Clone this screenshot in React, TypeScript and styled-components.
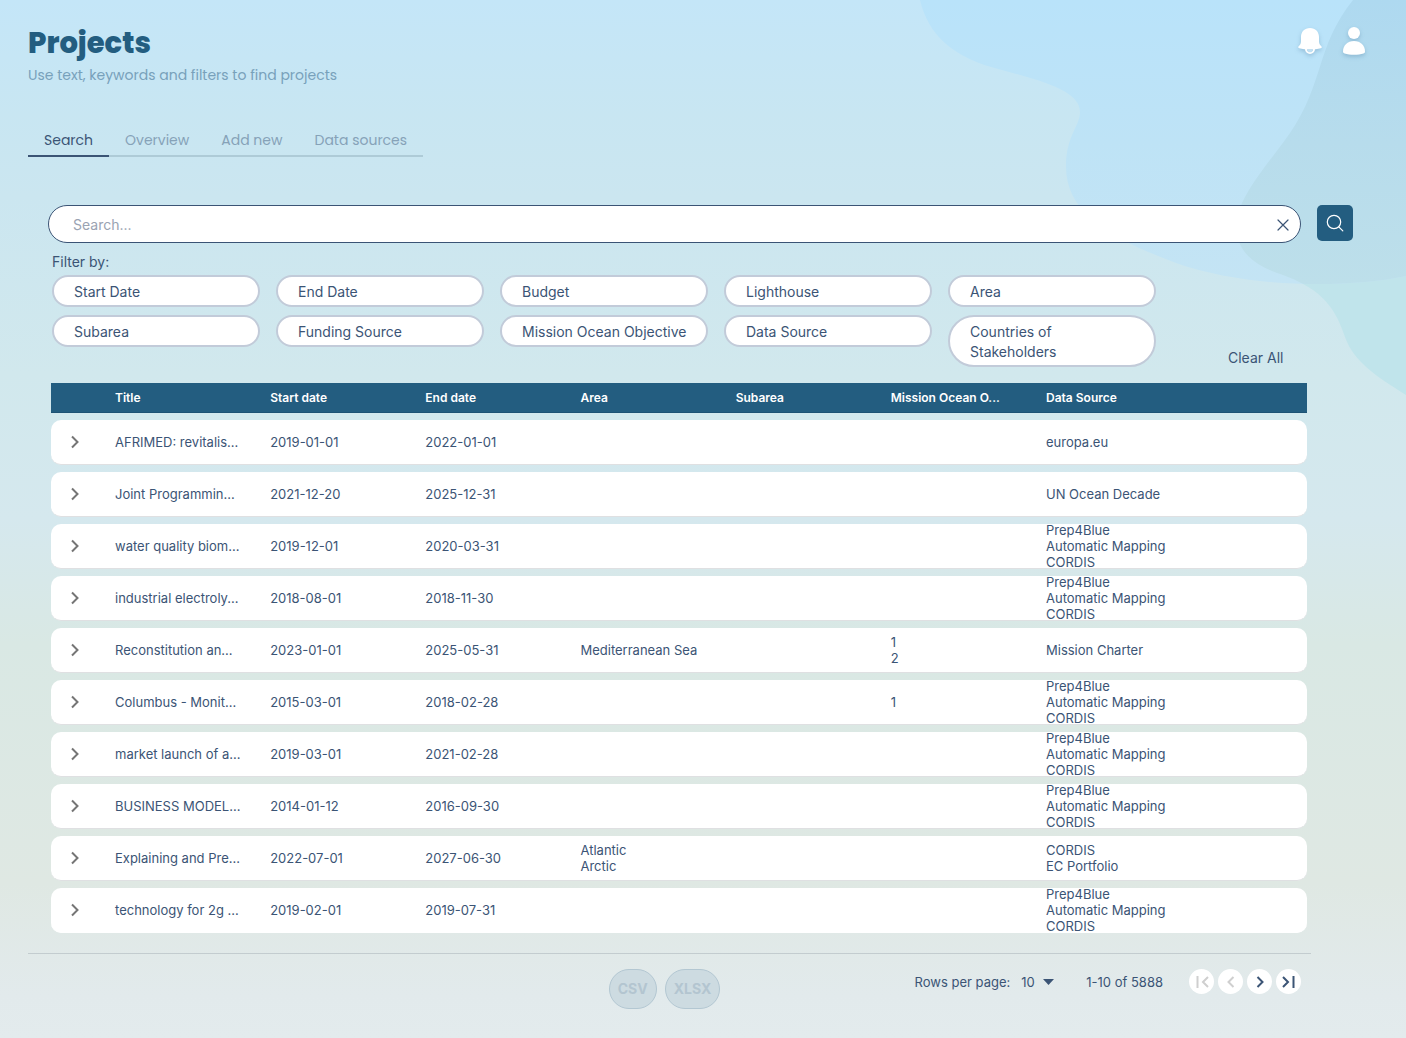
import React, { useState } from "react";
import styled, { createGlobalStyle } from "styled-components";

const navy = "#3b5475";
const ocean = "#235d80";

const GlobalStyle = createGlobalStyle`
  *, *::before, *::after { box-sizing: border-box; }
  body {
    margin: 0;
    color: ${navy};
    font-family: Inter, "Liberation Sans", sans-serif;
    font-size: 14px;
    line-height: 20px;
  }
  button, input, select { font: inherit; color: inherit; }
  button { border: 0; padding: 0; background: none; cursor: pointer; }
`;

const Page = styled.div`
  position: relative;
  min-height: 100vh;
  padding: 23px 28px 28px;
  background: linear-gradient(
    180deg,
    #c4e6f8 0%,
    #c8e6f2 11%,
    #cbe6f0 19%,
    #d1e8ed 36%,
    #d5e8ee 50%,
    #d9e8e4 62%,
    #dfe8e3 85%,
    #e2eaec 96%,
    #e3ebed 100%
  );
`;

const Waves = styled.svg`
  position: absolute;
  top: 0;
  right: 0;
  width: 486px;
  height: 396px;
  pointer-events: none;
`;

const Header = styled.header`
  position: relative;
  display: flex;
  justify-content: space-between;
  align-items: flex-start;
  padding-right: 10px;
`;

const Title = styled.h1`
  margin: 0;
  color: ${ocean};
  font-family: Poppins, Inter, sans-serif;
  font-size: 29px;
  font-weight: 800;
  line-height: 40px;
`;

const Subtitle = styled.p`
  margin: 0;
  color: #78a1bb;
  font-family: Poppins, Inter, sans-serif;
  line-height: 24px;
`;

const HeaderActions = styled.div`
  display: flex;
  gap: 16px;
  padding-top: 1px;
`;

const HeaderButton = styled.button`
  display: grid;
  width: 28px;
  height: 32px;
  color: #fff;
  filter: drop-shadow(0 2px 2px rgba(60, 110, 150, 0.3));
`;

const Tabs = styled.nav`
  position: relative;
  display: flex;
  width: fit-content;
  margin-top: 37px;
  font-family: Poppins, Inter, sans-serif;
`;

const Tab = styled.a<{ $active?: boolean }>`
  padding: 6px 16px 5px;
  border-bottom: 2px solid ${(p) => (p.$active ? navy : "#aecbd7")};
  color: ${(p) => (p.$active ? navy : "#86a2b8")};
  line-height: 20px;
  text-decoration: none;
`;

const SearchForm = styled.form`
  position: relative;
  display: flex;
  align-items: flex-start;
  gap: 16px;
  margin: 48px 25px 0 20px;
`;

const SearchField = styled.div`
  display: flex;
  flex: 1;
  align-items: center;
  height: 38px;
  padding: 2px 11px 0 24px;
  border: 1px solid ${navy};
  border-radius: 19px;
  background: #fff;
`;

const SearchInput = styled.input`
  flex: 1;
  min-width: 0;
  padding: 0;
  border: 0;
  outline: 0;
  background: transparent;
  &::placeholder { color: #9aa3b2; opacity: 1; }
`;

const ClearInput = styled.button`
  display: grid;
  width: 12px;
  height: 12px;
`;

const SearchButton = styled.button`
  display: grid;
  place-items: center;
  width: 36px;
  height: 36px;
  border-radius: 5px;
  background: ${ocean};
  color: #fff;
`;

const Filters = styled.section`
  position: relative;
  margin: 9px 24px 0;
`;

const FiltersLabel = styled.h2`
  margin: 0 0 3px;
  font-size: 14px;
  font-weight: 400;
  line-height: 20px;
`;

const FiltersRow = styled.div`
  display: flex;
  align-items: flex-end;
  gap: 72px;
`;

const FilterGrid = styled.div`
  display: grid;
  grid-template-columns: repeat(5, 208px);
  align-items: start;
  gap: 8px 16px;
`;

const FilterButton = styled.button`
  padding: 5px 16px 3px 20px;
  border: 2px solid #c2cbd9;
  border-radius: 26px;
  background: #fff;
  text-align: left;
`;

const ClearAll = styled.button`
  line-height: 18px;
  white-space: nowrap;
`;

const TableWrap = styled.div`
  position: relative;
  margin: 9px 71px 0 23px;
`;

const Table = styled.table`
  width: 100%;
  table-layout: fixed;
  border-collapse: separate;
  border-spacing: 0 7px;
  font-size: 13px;
  line-height: 16px;
`;

const HeadCell = styled.th<{ $width?: number }>`
  width: ${(p) => (p.$width ? `${p.$width}px` : "auto")};
  height: 30px;
  padding: 0 16px;
  border-bottom: 1px solid #1d5274;
  background: ${ocean};
  color: #fff;
  font-size: 12px;
  font-weight: 600;
  text-align: left;
  white-space: nowrap;
`;

const Cell = styled.td`
  height: 45px;
  padding: 0 0 0 16px;
  border-bottom: 1px solid #dfe0e2;
  background: #fff;
  white-space: nowrap;
  &:first-child { border-radius: 10px 0 0 10px; }
  &:last-child { border-radius: 0 10px 10px 0; }
  tr:last-child > & { border-bottom-color: #fff; }
`;

const Lines = styled.div`
  display: flex;
  flex-direction: column;
  justify-content: center;
  height: 44px;
`;

const ExpandButton = styled.button`
  display: grid;
  color: #757575;
`;

const Footer = styled.footer`
  position: relative;
  display: grid;
  grid-template-columns: 1fr auto 1fr;
  align-items: start;
  margin: 13px 67px 0 0;
  padding: 15px 10px 0 0;
  border-top: 1px solid #c3cccf;
`;

const Exports = styled.div`
  display: flex;
  grid-column: 2;
  gap: 8px;
`;

const ExportButton = styled.button`
  height: 40px;
  padding: 0 8px;
  border: 1px solid #b3c7d2;
  border-radius: 20px;
  background: #cddbe1;
  color: #b3c5d0;
  font-weight: 700;
`;

const Pagination = styled.div`
  display: flex;
  align-items: center;
  justify-content: flex-end;
  height: 25px;
  font-size: 13px;
`;

const PageSize = styled.span`
  position: relative;
  display: flex;
  align-items: center;
  margin: 0 32px 0 11px;
`;

const PageSelect = styled.select`
  width: 33px;
  padding: 0;
  border: 0;
  outline: 0;
  appearance: none;
  background: transparent;
`;

const Caret = styled.svg`
  position: absolute;
  right: 0;
  width: 11px;
  height: 6px;
  pointer-events: none;
`;

const PageButtons = styled.div`
  display: flex;
  gap: 4px;
  margin-left: 26px;
`;

const PageButton = styled.button`
  display: grid;
  place-items: center;
  width: 25px;
  height: 25px;
  border-radius: 50%;
  background: #fff;
  color: ${navy};
  &:disabled { color: #cfcfcf; }
`;

const lightWave =
  "M0 0 C8 34 32 58 82 70 C118 80 160 90 160 112 C160 126 146 136 146 166 C146 214 190 238 256 263 C330 289 430 288 486 276 V0 Z";
const deepWave =
  "M433 0 C396 46 404 84 370 133 C354 156 334 178 322 203 C306 244 328 264 363 275 C404 290 416 310 425 337 C434 362 456 376 486 395 V0 Z";

const Background = () => (
  <Waves viewBox="0 0 486 396" aria-hidden="true">
    <defs>
      <linearGradient id="light" x1="0" y1="0" x2="0" y2="1">
        <stop offset="0" stopColor="#b9e3fa" />
        <stop offset="0.5" stopColor="#bee3f6" />
        <stop offset="1" stopColor="#c4e4f4" />
      </linearGradient>
      <linearGradient id="deep" x1="0" y1="0" x2="0" y2="284" gradientUnits="userSpaceOnUse">
        <stop offset="0" stopColor="#aed9f0" />
        <stop offset="0.5" stopColor="#b7dcec" />
        <stop offset="1" stopColor="#bddfea" />
      </linearGradient>
      <clipPath id="overlap">
        <path d={lightWave} />
      </clipPath>
    </defs>
    <path d={deepWave} fill="#c0e4eb" />
    <path d={lightWave} fill="url(#light)" />
    <path d={deepWave} fill="url(#deep)" clipPath="url(#overlap)" />
  </Waves>
);

const BellIcon = () => (
  <svg width="28" height="32" viewBox="0 0 28 32">
    <path
      d="M14 4C8.600 4 5 7.800 5 13v4.500c0 2.200-1 3.600-2.300 4.800-.9.900-.6 1.700.6 2 3 .9 6.700 1.300 10.700 1.300s7.700-.4 10.700-1.300c1.200-.3 1.500-1.100.6-2C24 21.100 23 19.700 23 17.500V13c0-5.200-3.600-9-9-9z"
      fill="currentColor"
    />
    <circle cx="14" cy="25" r="4" fill="none" stroke="currentColor" strokeWidth="2" />
    <path d="M11.200 25.400h5.600a2.800 2.800 0 0 1-5.600 0z" fill="#bfe0f4" />
  </svg>
);

const PersonIcon = () => (
  <svg width="28" height="32" viewBox="0 0 28 32">
    <circle cx="14" cy="9" r="6" fill="currentColor" />
    <path
      d="M3 27.500C3 21.500 7.500 17 14 17s11 4.500 11 10.500c0 1-.5 1.500-1.500 1.900-5 1.900-14 1.900-19 0C3.500 29 3 28.500 3 27.500z"
      fill="currentColor"
    />
  </svg>
);

const CloseIcon = () => (
  <svg width="12" height="12" viewBox="0 0 12 12">
    <path d="M1 1l10 10M11 1L1 11" stroke="currentColor" strokeWidth="1.200" strokeLinecap="round" />
  </svg>
);

const SearchIcon = () => (
  <svg width="18" height="18" viewBox="0 0 18 18" fill="none" stroke="currentColor" strokeWidth="1.200">
    <circle cx="8" cy="8" r="6.700" />
    <path d="M12.800 12.800l4 4" strokeLinecap="round" />
  </svg>
);

const ExpandIcon = () => (
  <svg width="16" height="16" viewBox="0 0 16 16">
    <path d="M5 2.500L10.500 8L5 13.500" fill="none" stroke="currentColor" strokeWidth="2" />
  </svg>
);

const pageIconPaths = {
  first: "M4.500 3v12M15 4L10 9l5 5",
  previous: "M11.500 4L6.500 9l5 5",
  next: "M6.500 4l5 5-5 5",
  last: "M3 4l5 5-5 5M13.500 3v12",
};

const PageIcon = ({ kind }: { kind: keyof typeof pageIconPaths }) => (
  <svg width="18" height="18" viewBox="0 0 18 18" fill="none" stroke="currentColor" strokeWidth="2">
    <path d={pageIconPaths[kind]} />
  </svg>
);

const tabs = ["Search", "Overview", "Add new", "Data sources"];

const filters = [
  "Start Date",
  "End Date",
  "Budget",
  "Lighthouse",
  "Area",
  "Subarea",
  "Funding Source",
  "Mission Ocean Objective",
  "Data Source",
  "Countries of Stakeholders",
];

interface Project {
  title: string;
  start: string;
  end: string;
  area?: string[];
  subarea?: string[];
  objectives?: string[];
  sources: string[];
}

const mapped = ["Prep4Blue", "Automatic Mapping", "CORDIS"];

const projects: Project[] = [
  { title: "AFRIMED: revitalis...", start: "2019-01-01", end: "2022-01-01", sources: ["europa.eu"] },
  { title: "Joint Programmin...", start: "2021-12-20", end: "2025-12-31", sources: ["UN Ocean Decade"] },
  { title: "water quality biom...", start: "2019-12-01", end: "2020-03-31", sources: mapped },
  { title: "industrial electroly...", start: "2018-08-01", end: "2018-11-30", sources: mapped },
  {
    title: "Reconstitution an...",
    start: "2023-01-01",
    end: "2025-05-31",
    area: ["Mediterranean Sea"],
    objectives: ["1", "2"],
    sources: ["Mission Charter"],
  },
  { title: "Columbus - Monit...", start: "2015-03-01", end: "2018-02-28", objectives: ["1"], sources: mapped },
  { title: "market launch of a...", start: "2019-03-01", end: "2021-02-28", sources: mapped },
  { title: "BUSINESS MODEL...", start: "2014-01-12", end: "2016-09-30", sources: mapped },
  {
    title: "Explaining and Pre...",
    start: "2022-07-01",
    end: "2027-06-30",
    area: ["Atlantic", "Arctic"],
    sources: ["CORDIS", "EC Portfolio"],
  },
  { title: "technology for 2g ...", start: "2019-02-01", end: "2019-07-31", sources: mapped },
];

const LinesCell = ({ values = [] }: { values?: string[] }) => (
  <Cell>
    <Lines>
      {values.map((value) => (
        <span key={value}>{value}</span>
      ))}
    </Lines>
  </Cell>
);

export default function App() {
  const [query, setQuery] = useState("");

  return (
    <>
      <GlobalStyle />
      <Page>
        <Background />
        <Header>
          <div>
            <Title>Projects</Title>
            <Subtitle>Use text, keywords and filters to find projects</Subtitle>
          </div>
          <HeaderActions>
            <HeaderButton type="button" aria-label="Notifications">
              <BellIcon />
            </HeaderButton>
            <HeaderButton type="button" aria-label="Account">
              <PersonIcon />
            </HeaderButton>
          </HeaderActions>
        </Header>

        <Tabs>
          {tabs.map((tab, i) => (
            <Tab key={tab} href="#" $active={i === 0}>
              {tab}
            </Tab>
          ))}
        </Tabs>

        <SearchForm onSubmit={(e) => e.preventDefault()}>
          <SearchField>
            <SearchInput
              aria-label="Search projects"
              placeholder="Search..."
              value={query}
              onChange={(e) => setQuery(e.target.value)}
            />
            <ClearInput type="button" aria-label="Clear search" onClick={() => setQuery("")}>
              <CloseIcon />
            </ClearInput>
          </SearchField>
          <SearchButton type="submit" aria-label="Search">
            <SearchIcon />
          </SearchButton>
        </SearchForm>

        <Filters>
          <FiltersLabel>Filter by:</FiltersLabel>
          <FiltersRow>
            <FilterGrid>
              {filters.map((filter) => (
                <FilterButton key={filter} type="button">
                  {filter}
                </FilterButton>
              ))}
            </FilterGrid>
            <ClearAll type="button">Clear All</ClearAll>
          </FiltersRow>
        </Filters>

        <TableWrap>
          <Table>
            <thead>
              <tr>
                <HeadCell $width={48} aria-label="Expand" />
                <HeadCell>Title</HeadCell>
                <HeadCell>Start date</HeadCell>
                <HeadCell>End date</HeadCell>
                <HeadCell>Area</HeadCell>
                <HeadCell>Subarea</HeadCell>
                <HeadCell>Mission Ocean O...</HeadCell>
                <HeadCell $width={277}>Data Source</HeadCell>
              </tr>
            </thead>
            <tbody>
              {projects.map((project) => (
                <tr key={project.title}>
                  <Cell>
                    <ExpandButton type="button" aria-label="Expand row">
                      <ExpandIcon />
                    </ExpandButton>
                  </Cell>
                  <LinesCell values={[project.title]} />
                  <LinesCell values={[project.start]} />
                  <LinesCell values={[project.end]} />
                  <LinesCell values={project.area} />
                  <LinesCell values={project.subarea} />
                  <LinesCell values={project.objectives} />
                  <LinesCell values={project.sources} />
                </tr>
              ))}
            </tbody>
          </Table>
        </TableWrap>

        <Footer>
          <Exports>
            <ExportButton type="button" disabled>CSV</ExportButton>
            <ExportButton type="button" disabled>XLSX</ExportButton>
          </Exports>
          <Pagination>
            <label htmlFor="page-size">Rows per page:</label>
            <PageSize>
              <PageSelect id="page-size" defaultValue="10">
                <option>10</option>
                <option>20</option>
                <option>50</option>
              </PageSelect>
              <Caret viewBox="0 0 11 6">
                <path d="M0 0h11L5.500 6z" fill="currentColor" />
              </Caret>
            </PageSize>
            <span>1-10 of 5888</span>
            <PageButtons>
              <PageButton type="button" aria-label="First page" disabled>
                <PageIcon kind="first" />
              </PageButton>
              <PageButton type="button" aria-label="Previous page" disabled>
                <PageIcon kind="previous" />
              </PageButton>
              <PageButton type="button" aria-label="Next page">
                <PageIcon kind="next" />
              </PageButton>
              <PageButton type="button" aria-label="Last page">
                <PageIcon kind="last" />
              </PageButton>
            </PageButtons>
          </Pagination>
        </Footer>
      </Page>
    </>
  );
}
